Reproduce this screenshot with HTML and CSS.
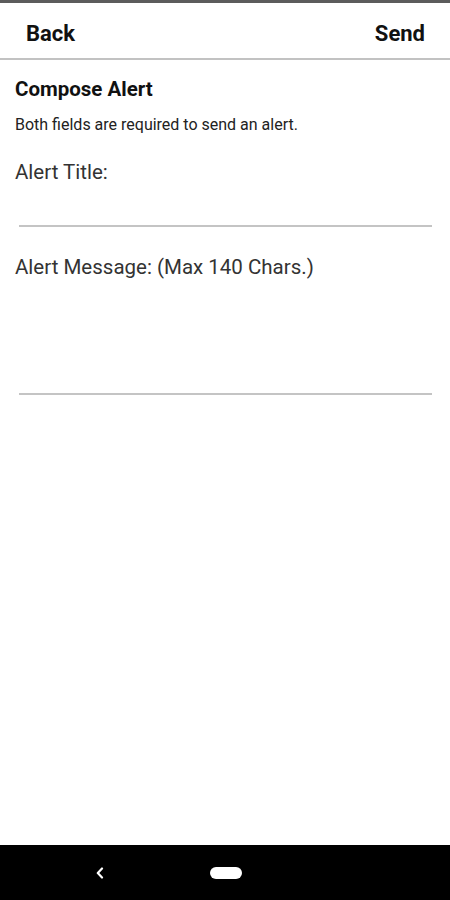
FILE: index.html
```html
<!DOCTYPE html>
<html lang="en">
<head>
    <meta charset="UTF-8">
    <meta name="viewport" content="width=device-width, initial-scale=1.0">
    <title>Compose Alert</title>
    <link rel="stylesheet" href="styles.css">
</head>
<body>
    <div class="screen">
        <div class="status-strip"></div>

        <div class="header">
            <span class="header-btn">Back</span>
            <span class="header-btn">Send</span>
        </div>

        <div class="content">
            <h1 class="title">Compose Alert</h1>
            <p class="hint">Both fields are required to send an alert.</p>

            <label class="field-label" for="alertTitle">Alert Title:</label>
            <div class="field field-title" id="alertTitle"></div>

            <label class="field-label field-label-msg" for="alertMessage">Alert Message: (Max 140 Chars.)</label>
            <div class="field field-message" id="alertMessage"></div>
        </div>

        <div class="nav-bar">
            <svg class="nav-back" width="10" height="12" viewBox="0 0 10 12">
                <path d="M7 1.5 L2.8 6 L7 10.5" fill="none" stroke="#fff" stroke-width="2.2" stroke-linecap="round" stroke-linejoin="round"/>
            </svg>
            <div class="nav-home"></div>
        </div>
    </div>
</body>
</html>
```

FILE: styles.css
```css
html, body {
    margin: 0;
    padding: 0;
    background: #fff;
}

body {
    font-family: Roboto, "Noto Sans", Arial, sans-serif;
    color: #111;
}

.screen {
    width: 450px;
    height: 900px;
    display: flex;
    flex-direction: column;
}

.status-strip {
    height: 3px;
    background: #5c5c5c;
}

.header {
    height: 57px;
    display: flex;
    align-items: center;
    justify-content: space-between;
    padding: 5px 25px 0 26px;
    box-sizing: border-box;
    border-bottom: 2px solid #c2c2c2;
}

.header-btn {
    font-size: 22px;
    font-weight: bold;
    color: #111;
}

.content {
    flex: 1;
    padding: 0 15px;
}

.title {
    margin: 17px 0 0;
    font-size: 20.5px;
    line-height: 24px;
    font-weight: bold;
    color: #111;
}

.hint {
    margin: 14px 0 0;
    font-size: 16px;
    line-height: 20px;
    color: #222;
}

.field-label {
    display: block;
    margin-top: 25px;
    font-size: 20.5px;
    line-height: 24px;
    color: #333;
}

.field-label-msg {
    margin-top: 28px;
}

.field {
    margin: 0 3px 0 4px;
    border-bottom: 2px solid #c4c4c4;
}

.field-title {
    height: 41px;
}

.field-message {
    height: 114px;
}

.nav-bar {
    height: 55px;
    background: #000;
    display: flex;
    align-items: center;
    padding-left: 95px;
}

.nav-back {
    display: block;
    margin-top: 1px;
}

.nav-home {
    width: 32px;
    height: 12px;
    border-radius: 6px;
    background: #fff;
    margin-left: 105px;
}
```
